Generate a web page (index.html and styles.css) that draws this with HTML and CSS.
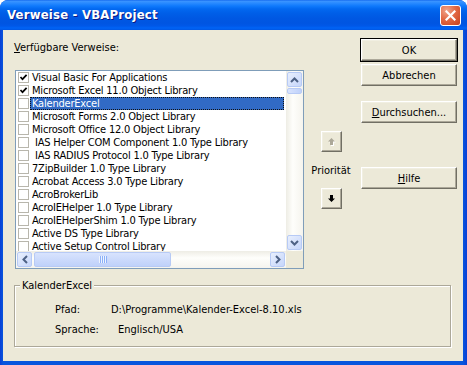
FILE: index.html
```html
<!DOCTYPE html>
<html lang="de">
<head>
  <meta charset="UTF-8">
  <meta name="viewport" content="width=device-width, initial-scale=1.0">
  <title>Verweise - VBAProject</title>
  <link rel="stylesheet" href="styles.css">
</head>
<body>
  <div class="window">
    <!-- Title bar -->
    <div class="titlebar">
      <span class="title">Verweise - VBAProject</span>
      <button class="close-btn" aria-label="Schließen">
        <svg width="11" height="11" viewBox="0 0 11 11"><path d="M1.5 1.5 L9.5 9.5 M9.5 1.5 L1.5 9.5" stroke="#fff" stroke-width="2.2" stroke-linecap="square"/></svg>
      </button>
    </div>

    <div class="client">
      <div class="top">
        <!-- Reference list -->
        <div class="refs">
          <div class="refs-label"><u>V</u>erfügbare Verweise:</div>
          <div class="listbox">
            <ul class="ref-list">
              <li class="ref"><span class="box"><svg width="9" height="9" viewBox="0 0 9 9"><path d="M1.5 4 L3.5 6.2 L7.6 1.8" fill="none" stroke="#000" stroke-width="1.7"/></svg></span><span class="name">Visual Basic For Applications</span></li>
              <li class="ref"><span class="box"><svg width="9" height="9" viewBox="0 0 9 9"><path d="M1.5 4 L3.5 6.2 L7.6 1.8" fill="none" stroke="#000" stroke-width="1.7"/></svg></span><span class="name">Microsoft Excel 11.0 Object Library</span></li>
              <li class="ref selected"><span class="box"></span><span class="name">KalenderExcel</span></li>
              <li class="ref"><span class="box"></span><span class="name">Microsoft Forms 2.0 Object Library</span></li>
              <li class="ref"><span class="box"></span><span class="name">Microsoft Office 12.0 Object Library</span></li>
              <li class="ref"><span class="box"></span><span class="name">&nbsp;IAS Helper COM Component 1.0 Type Library</span></li>
              <li class="ref"><span class="box"></span><span class="name">&nbsp;IAS RADIUS Protocol 1.0 Type Library</span></li>
              <li class="ref"><span class="box"></span><span class="name">7ZipBuilder 1.0 Type Library</span></li>
              <li class="ref"><span class="box"></span><span class="name">Acrobat Access 3.0 Type Library</span></li>
              <li class="ref"><span class="box"></span><span class="name">AcroBrokerLib</span></li>
              <li class="ref"><span class="box"></span><span class="name">AcroIEHelper 1.0 Type Library</span></li>
              <li class="ref"><span class="box"></span><span class="name">AcroIEHelperShim 1.0 Type Library</span></li>
              <li class="ref"><span class="box"></span><span class="name">Active DS Type Library</span></li>
              <li class="ref"><span class="box"></span><span class="name">Active Setup Control Library</span></li>
            </ul>
            <div class="vscroll">
              <span class="sb-btn"><svg width="9" height="6" viewBox="0 0 9 6"><path d="M1 5 L4.5 1.5 L8 5" fill="none" stroke="#4d6185" stroke-width="2"/></svg></span>
              <span class="sb-thumb-v"></span>
              <span class="sb-btn sb-end"><svg width="9" height="6" viewBox="0 0 9 6"><path d="M1 1 L4.5 4.5 L8 1" fill="none" stroke="#4d6185" stroke-width="2"/></svg></span>
            </div>
            <div class="hscroll">
              <span class="sb-btn"><svg width="6" height="9" viewBox="0 0 6 9"><path d="M5 1 L1.5 4.5 L5 8" fill="none" stroke="#4d6185" stroke-width="2"/></svg></span>
              <span class="sb-thumb-h"><span class="grip"></span></span>
              <span class="sb-btn sb-end"><svg width="6" height="9" viewBox="0 0 6 9"><path d="M1 1 L4.5 4.5 L1 8" fill="none" stroke="#4d6185" stroke-width="2"/></svg></span>
            </div>
            <div class="corner"></div>
          </div>
        </div>

        <!-- Priority -->
        <div class="priority">
          <button class="btn arrow-btn" disabled>
            <svg width="9" height="9" viewBox="0 0 9 9"><path d="M4.5 1 L8 4.5 L6 4.5 L6 8 L3 8 L3 4.5 L1 4.5 Z" fill="#aca899"/></svg>
          </button>
          <div class="priority-label">Priorität</div>
          <button class="btn arrow-btn">
            <svg width="9" height="9" viewBox="0 0 9 9"><path d="M4.5 8 L8 4.5 L6 4.5 L6 1 L3 1 L3 4.5 L1 4.5 Z" fill="#000"/></svg>
          </button>
        </div>

        <!-- Buttons -->
        <div class="actions">
          <button class="btn default">OK</button>
          <button class="btn">Abbrechen</button>
          <button class="btn browse"><u>D</u>urchsuchen...</button>
          <button class="btn help"><u>H</u>ilfe</button>
        </div>
      </div>

      <!-- Details of the selected reference -->
      <fieldset class="details">
        <legend>KalenderExcel</legend>
        <div class="detail-grid">
          <span>Pfad:</span>
          <span>D:\Programme\Kalender-Excel-8.10.xls</span>
          <span>Sprache:</span>
          <span class="lang">Englisch/USA</span>
        </div>
      </fieldset>
    </div>
  </div>
</body>
</html>
```

FILE: styles.css
```css
:root {
  --face: #ece9d8;
  --light: #f1efe2;
  --shadow: #aca899;
  --dark-shadow: #716f64;
  --select: #316ac5;
  --font-ui: "DejaVu Sans Condensed", "DejaVu Sans", sans-serif;
}

* {
  margin: 0;
  padding: 0;
  box-sizing: border-box;
}

body {
  font-family: var(--font-ui);
  font-size: 11px;
  color: #000;
  background: #fff;
}

/* Window frame */
.window {
  width: 467px;
  height: 365px;
  display: flex;
  flex-direction: column;
  background: linear-gradient(to right, #0a3fd6 0, #0855dd 3px, #0855dd 463px, #0a3fd6 467px);
  border-radius: 8px 8px 0 0;
  overflow: hidden;
}

.titlebar {
  height: 30px;
  flex: none;
  display: flex;
  align-items: center;
  justify-content: space-between;
  padding: 0 6px 0 7px;
  background: linear-gradient(to bottom, #0a5fea 0, #3d95ff 1px, #2a8bff 3px, #0f79fc 6px, #0268f0 9px, #005fe8 13px, #0058e3 18px, #0055e1 23px, #0058e8 26px, #0064f6 28px, #0057e3 30px);
}

.title {
  color: #fff;
  font-weight: bold;
  font-size: 13px;
  letter-spacing: 0.2px;
  text-shadow: 1px 1px 0 #0a1883;
  padding-bottom: 1px;
}

.close-btn {
  width: 21px;
  height: 21px;
  display: flex;
  align-items: center;
  justify-content: center;
  border: 1px solid #fff;
  border-radius: 3px;
  background: radial-gradient(circle at 30% 25%, #f0a58c 0, #e26a45 45%, #c8401d 100%);
}

.client {
  flex: 1;
  margin: 0 4px 4px 3px;
  background: var(--face);
  padding: 8px 6px 0 11px;
}

.top {
  display: flex;
  align-items: flex-start;
}

/* Reference list */
.refs {
  width: 289px;
  margin-left: 1px;
}

.refs-label {
  line-height: 13px;
  margin: 3px 0 16px -1px;
}

.listbox {
  height: 199px;
  border: 1px solid #7f9db9;
  background: #fff;
  display: grid;
  grid-template-columns: 1fr 17px;
  grid-template-rows: 1fr 17px;
}

.ref-list {
  list-style: none;
  overflow: hidden;
}

.ref {
  display: flex;
  align-items: center;
  height: 13px;
  line-height: 13px;
  white-space: nowrap;
}

.box {
  width: 11px;
  height: 11px;
  flex: none;
  margin: 0 1px 0 2px;
  border: 1px solid #b8b6ac;
  background: #fff;
  display: flex;
  align-items: center;
  justify-content: center;
}

.name {
  flex: 1;
  min-width: 0;
  padding: 0 2px;
  margin-right: 2px;
  letter-spacing: -0.2px;
}

.ref.selected .name {
  background: var(--select);
  color: #fff;
  outline: 1px dotted #111;
  outline-offset: -1px;
}

/* Scrollbars */
.vscroll {
  display: flex;
  flex-direction: column;
  background: linear-gradient(to right, #eeede5, #fefefb 40%, #f5f4ee);
}

.hscroll {
  display: flex;
  background: linear-gradient(to bottom, #eeede5, #fefefb 40%, #f5f4ee);
}

.sb-btn {
  width: 15px;
  height: 15px;
  margin: 1px;
  flex: none;
  display: flex;
  align-items: center;
  justify-content: center;
  border: 1px solid #b7caf5;
  border-radius: 2px;
  background: linear-gradient(135deg, #e8effd, #c6d6fb);
}

.sb-end {
  margin-top: auto;
  margin-left: auto;
}

.vscroll .sb-end {
  margin-left: 1px;
}

.hscroll .sb-end {
  margin-top: 1px;
}

.sb-thumb-v {
  height: 6px;
  margin: 0 1px;
  border: 1px solid #b7caf5;
  border-radius: 2px;
  background: linear-gradient(to right, #d8e3fd, #bfd1fa);
}

.sb-thumb-h {
  width: 137px;
  height: 15px;
  margin: 1px 0 1px 1px;
  display: flex;
  align-items: center;
  justify-content: center;
  border: 1px solid #b7caf5;
  border-radius: 2px;
  background: linear-gradient(to bottom, #d8e3fd, #bfd1fa);
}

.grip {
  width: 8px;
  height: 7px;
  background: repeating-linear-gradient(to right, #eef4fe 0, #eef4fe 1px, #8cb0f8 1px, #8cb0f8 2px);
}

.corner {
  background: var(--face);
}

/* Classic 3D buttons */
.btn {
  height: 22px;
  font-family: var(--font-ui);
  font-size: 11px;
  color: #000;
  background: var(--face);
  border: 1px solid;
  border-color: #fff var(--dark-shadow) var(--dark-shadow) #fff;
  box-shadow: inset -1px -1px 0 var(--shadow), inset 1px 1px 0 var(--light);
}

.priority {
  width: 40px;
  margin-left: 7px;
  display: flex;
  flex-direction: column;
  align-items: center;
}

.arrow-btn {
  width: 21px;
  height: 21px;
  display: flex;
  align-items: center;
  justify-content: center;
}

.arrow-btn:first-child {
  margin-top: 93px;
}

.arrow-btn:disabled svg {
  filter: drop-shadow(1px 1px 0 #fff);
}

.priority-label {
  line-height: 13px;
  margin: 12px 0 11px;
  white-space: nowrap;
}

.actions {
  width: 96px;
  margin-left: 10px;
  display: flex;
  flex-direction: column;
}

.actions .default {
  margin-top: 1px;
  outline: 1px solid #000;
}

.actions .btn + .btn {
  margin-top: 3px;
}

.actions .browse {
  margin-top: 15px !important;
}

.actions .help {
  margin-top: 44px !important;
}

/* Details frame */
.details {
  margin: 10px 6px 0 0;
  padding: 11px 0 10px 0;
  border: 1px solid var(--shadow);
  box-shadow: 1px 1px 0 #fff, inset 1px 1px 0 #fff;
}

.details legend {
  margin-left: 5px;
  padding: 0 2px;
  line-height: 13px;
  background: var(--face);
}

.detail-grid {
  display: grid;
  grid-template-columns: 56px auto;
  row-gap: 7px;
  line-height: 13px;
  padding-left: 40px;
}

.lang {
  padding-left: 7px;
}
```
